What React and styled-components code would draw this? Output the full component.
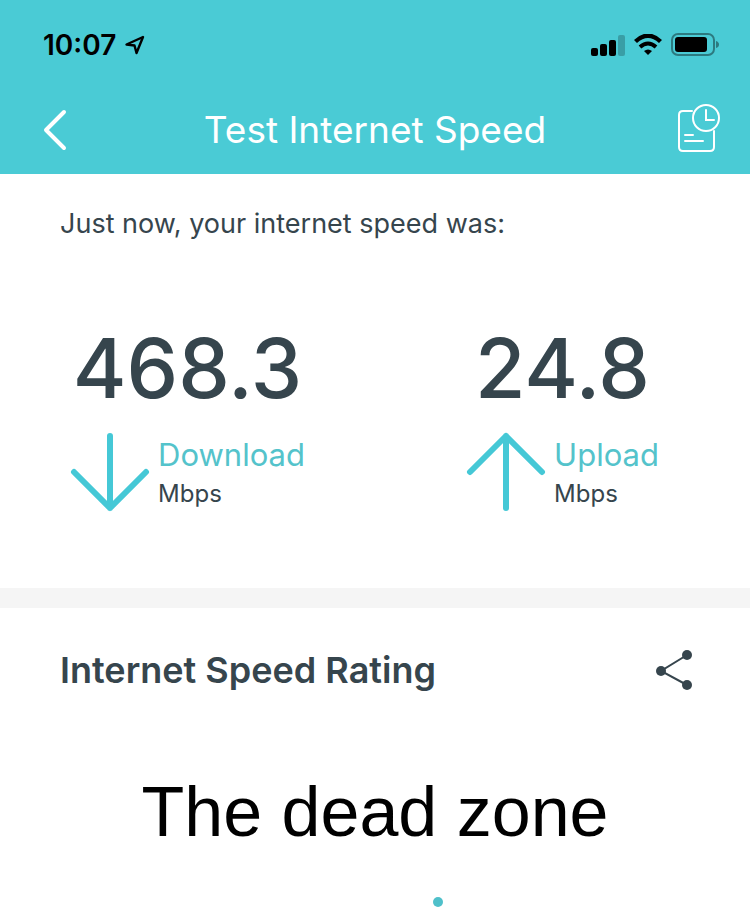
import React from 'react'
import styled, {createGlobalStyle} from 'styled-components'

const GlobalStyle = createGlobalStyle`
    * {
        box-sizing: border-box;
    }

    body {
        margin: 0;
        background: #fff;
        color: #36454d;
        font-family: Inter, "Liberation Sans", sans-serif;
        -webkit-font-smoothing: antialiased;
    }
`;

const Header = styled.header`
    background: #4acbd5;
    color: #fff;
`;

const StatusBar = styled.div`
    display: flex;
    align-items: center;
    justify-content: space-between;
    height: 90px;
    padding: 0 31px 0 43px;
    color: #000;
`;

const StatusGroup = styled.div`
    display: flex;
    align-items: center;
    gap: 8px;
`;

const Clock = styled.time`
    font-size: 28px;
    font-weight: 600;
    line-height: 36px;
`;

const NavBar = styled.nav`
    display: flex;
    align-items: center;
    justify-content: space-between;
    height: 84px;
    padding: 0 30px 4px 40px;
`;

const Title = styled.h1`
    margin: 0;
    font-size: 37px;
    font-weight: 400;
    line-height: 48px;
`;

const IconButton = styled.button`
    display: flex;
    padding: 0;
    border: 0;
    background: none;
    color: inherit;
    cursor: pointer;
`;

const Results = styled.section`
    padding: 32px 0 76px;
    border-bottom: 20px solid #f5f5f5;
`;

const Intro = styled.p`
    margin: 0;
    padding: 0 60px;
    font-size: 27px;
    line-height: 36px;
`;

const Metrics = styled.div`
    display: grid;
    grid-template-columns: 1fr 1fr;
    margin-top: 77px;
`;

const Metric = styled.div`
    display: flex;
    flex-direction: column;
    align-items: center;
    gap: 13px;
`;

const Value = styled.div`
    font-size: 82px;
    font-weight: 500;
    line-height: 100px;
`;

const Direction = styled.div`
    display: flex;
    align-items: center;
    gap: 8px;
`;

const Label = styled.div`
    color: #54c3cb;
    font-size: 31px;
    line-height: 44px;
`;

const Unit = styled.div`
    font-size: 24px;
    line-height: 34px;
`;

const RatingHeader = styled.div`
    display: flex;
    align-items: center;
    justify-content: space-between;
    padding: 38px 56px 0 60px;
`;

const RatingTitle = styled.h2`
    margin: 0;
    font-size: 36px;
    font-weight: 600;
    line-height: 48px;
`;

const Rating = styled.p`
    margin: 78px 0 0;
    color: #000;
    font-family: "Liberation Sans", Arial, sans-serif;
    font-size: 70px;
    line-height: 80px;
    text-align: center;
`;

const Gauge = styled.div`
    display: flex;
    justify-content: center;
    padding-top: 42px;
`;

const LocationIcon = () => (
    <svg width="22" height="20" viewBox="0 0 22 20" fill="none" stroke="currentColor" strokeWidth="2.4"
         strokeLinejoin="round">
        <path d="M19 2L2.5 9.5L10.5 10.5L12.5 18Z"/>
    </svg>
);

const SignalIcon = () => (
    <svg width="34" height="22" viewBox="0 0 34 22">
        <rect x="0" y="14" width="7" height="8" rx="2"/>
        <rect x="9" y="10" width="7" height="12" rx="2"/>
        <rect x="18" y="6" width="7" height="16" rx="2"/>
        <rect x="27" y="1" width="7" height="21" rx="2" opacity=".22"/>
    </svg>
);

const WifiIcon = () => (
    <svg width="30" height="22" viewBox="0 0 30 22">
        <path d="M2.5 7.5Q15 -4 27.5 7.5" fill="none" stroke="#000" strokeWidth="4.4"/>
        <path d="M7 13Q15 6 23 13" fill="none" stroke="#000" strokeWidth="4"/>
        <path d="M11 17Q15 14 19 17L15 21Z"/>
    </svg>
);

const BatteryIcon = () => (
    <svg width="48" height="24" viewBox="0 0 48 24">
        <rect x="1" y="1" width="42" height="21" rx="6" fill="none" stroke="#000" strokeWidth="2" opacity=".4"/>
        <rect x="4" y="4" width="32" height="15" rx="3"/>
        <path d="M45 8Q48 9 48 11.5T45 15Z" opacity=".4"/>
    </svg>
);

const BackIcon = () => (
    <svg width="34" height="44" viewBox="0 0 34 44" fill="none" stroke="currentColor" strokeWidth="4"
         strokeLinecap="round" strokeLinejoin="round">
        <path d="M24 4L6 22L24 40"/>
    </svg>
);

const HistoryIcon = () => (
    <svg width="44" height="52" viewBox="0 0 44 52" fill="none" stroke="currentColor" strokeWidth="2"
         strokeLinecap="round">
        <path d="M16 7H7Q3 7 3 11V43Q3 47 7 47H34Q38 47 38 43V27"/>
        <circle cx="30" cy="14" r="13"/>
        <path d="M30 6V16H38M9 31H17M9 37H27"/>
    </svg>
);

const ArrowIcon = ({up}) => (
    <svg width="80" height="80" viewBox="0 0 80 80" fill="none" stroke="#45c8d6" strokeWidth="6"
         strokeLinecap="round" strokeLinejoin="round">
        <path d={up ? 'M40 76V4M4 40L40 4L76 40' : 'M40 4V76M4 40L40 76L76 40'}/>
    </svg>
);

const ShareIcon = () => (
    <svg width="40" height="42" viewBox="0 0 40 42" fill="currentColor">
        <path d="M33 6L7 22L33 36" fill="none" stroke="currentColor" strokeWidth="2"/>
        <circle cx="33" cy="6" r="5"/>
        <circle cx="7" cy="22" r="5"/>
        <circle cx="33" cy="36" r="5"/>
    </svg>
);

const metrics = [
    {label: 'Download', value: '468.3', up: false},
    {label: 'Upload', value: '24.8', up: true},
];

const App = () => (
    <React.Fragment>
        <GlobalStyle/>
        <Header>
            <StatusBar>
                <StatusGroup>
                    <Clock>10:07</Clock>
                    <LocationIcon/>
                </StatusGroup>
                <StatusGroup>
                    <SignalIcon/>
                    <WifiIcon/>
                    <BatteryIcon/>
                </StatusGroup>
            </StatusBar>
            <NavBar>
                <IconButton aria-label="Back"><BackIcon/></IconButton>
                <Title>Test Internet Speed</Title>
                <IconButton aria-label="Test history"><HistoryIcon/></IconButton>
            </NavBar>
        </Header>
        <main>
            <Results>
                <Intro>Just now, your internet speed was:</Intro>
                <Metrics>
                    {metrics.map(e => (
                        <Metric key={e.label}>
                            <Value>{e.value}</Value>
                            <Direction>
                                <ArrowIcon up={e.up}/>
                                <div>
                                    <Label>{e.label}</Label>
                                    <Unit>Mbps</Unit>
                                </div>
                            </Direction>
                        </Metric>
                    ))}
                </Metrics>
            </Results>
            <section>
                <RatingHeader>
                    <RatingTitle>Internet Speed Rating</RatingTitle>
                    <IconButton aria-label="Share"><ShareIcon/></IconButton>
                </RatingHeader>
                <Rating>The dead zone</Rating>
                <Gauge>
                    <svg width="136" height="16" viewBox="0 0 136 16">
                        <circle cx="131" cy="8" r="5" fill="#4fc0ca"/>
                    </svg>
                </Gauge>
            </section>
        </main>
    </React.Fragment>
);

export default App
